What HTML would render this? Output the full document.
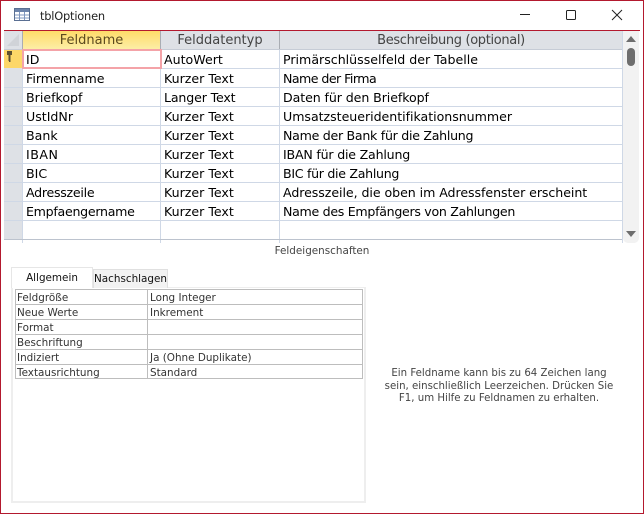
<!DOCTYPE html>
<html><head><meta charset="utf-8"><style>
html,body{margin:0;padding:0;background:#fff}
body{width:644px;height:514px;position:relative;overflow:hidden;font-family:"DejaVu Sans","Liberation Sans",sans-serif}
.a{position:absolute;white-space:nowrap}
.win{position:absolute;left:0;top:0;width:642px;height:512px;border:1px solid #b3192e}
.h{top:31px;height:18px;line-height:19px;text-align:center;font-size:13px;color:#444;background:#dee1e6}
.l{background:#cfd8e6;position:absolute}
.t{font-size:12.6px;color:#000;line-height:19px;height:19px}
.p{font-size:10.4px;color:#333;line-height:15px;height:15px}
.g{background:#bdbdbd;position:absolute}
</style></head><body>
<div class="win"></div>
<svg class="a" style="left:14px;top:8px" width="17" height="14" viewBox="0 0 17 14">
<rect x=".5" y=".5" width="15" height="12" fill="#fff" stroke="#5a6f92"/><rect x="1" y="1" width="14" height="3" fill="#6d84ab"/>
<path d="M1 7h14M1 10h14M5.500 4v8M10.500 4v8" stroke="#7f97bf" fill="none"/></svg>
<div class="a" style="left:40px;top:7px;font-size:11.4px;letter-spacing:-.2px;line-height:18px;color:#222">tblOptionen</div>
<svg class="a" style="left:510px;top:5px" width="125" height="20" viewBox="0 0 125 20" fill="none" stroke="#222">
<path d="M10 9.500h10"/><rect x="56.500" y="5.500" width="9" height="9" rx="1"/><path d="M102 5l10 10M112 5l-10 10"/></svg>
<div class="a" style="left:4px;top:30px;width:636px;height:1px;background:#b3192e"></div>

<div class="a h" style="left:4px;width:18px"></div>
<svg class="a" style="left:6px;top:33px" width="14" height="14"><path d="M1 13L13 1V13Z" fill="#d0d3d8"/></svg>
<div class="a h" style="left:23px;width:137px;background:linear-gradient(#fedb69,#fdeea6);color:#5b4a1e">Feldname</div>
<div class="a h" style="left:161px;width:118px">Felddatentyp</div>
<div class="a h" style="left:280px;width:342px;letter-spacing:-.35px">Beschreibung (optional)</div>
<div class="a" style="left:160px;top:31px;width:1px;height:18px;background:#a9adb3"></div>
<div class="a" style="left:279px;top:31px;width:1px;height:18px;background:#a9adb3"></div>
<div class="a" style="left:22px;top:31px;width:1px;height:18px;background:#a9adb3"></div>
<div class="a" style="left:4px;top:49px;width:618px;height:1px;background:#c6ccd6"></div>

<div class="a" style="left:4px;top:50px;width:18px;height:190px;background:#dee1e6"></div>
<div class="a" style="left:4px;top:50px;width:19px;height:18px;background:#fdd768"></div>
<svg class="a" style="left:6px;top:50px" width="8" height="14" viewBox="0 0 8 14"><path d="M1 1h5v4H4.500v7H3v-1H2.500V5H1z" fill="#5d5030"/></svg>

<div class="l" style="left:22px;top:50px;width:1px;height:193px"></div>
<div class="l" style="left:160px;top:50px;width:1px;height:193px"></div>
<div class="l" style="left:279px;top:50px;width:1px;height:193px"></div>
<div class="l" style="left:622px;top:31px;width:1px;height:212px"></div>
<div class="l" style="left:4px;top:87px;width:618px;height:1px"></div>
<div class="l" style="left:4px;top:106px;width:618px;height:1px"></div>
<div class="l" style="left:4px;top:125px;width:618px;height:1px"></div>
<div class="l" style="left:4px;top:144px;width:618px;height:1px"></div>
<div class="l" style="left:4px;top:163px;width:618px;height:1px"></div>
<div class="l" style="left:4px;top:182px;width:618px;height:1px"></div>
<div class="l" style="left:4px;top:201px;width:618px;height:1px"></div>
<div class="l" style="left:4px;top:220px;width:618px;height:1px"></div>
<div class="a" style="left:4px;top:239px;width:618px;height:1px;background:#bcc3ce"></div>
<div class="l" style="left:23px;top:68px;width:599px;height:1px"></div>
<div class="a" style="left:22px;top:49px;width:140px;height:20px;border:2px solid #f4a3a8;box-sizing:border-box;background:#fff"></div>

<div class="a t" style="left:26px;top:50px">ID</div><div class="a t" style="left:164px;top:50px">AutoWert</div><div class="a t" style="left:283px;top:50px">Primärschlüsselfeld der Tabelle</div>
<div class="a t" style="left:26px;top:69px">Firmenname</div><div class="a t" style="left:164px;top:69px">Kurzer Text</div><div class="a t" style="left:283px;top:69px;letter-spacing:-.55px">Name der Firma</div>
<div class="a t" style="left:26px;top:88px">Briefkopf</div><div class="a t" style="left:164px;top:88px;letter-spacing:-.15px">Langer Text</div><div class="a t" style="left:283px;top:88px;letter-spacing:-.09px">Daten für den Briefkopf</div>
<div class="a t" style="left:26px;top:107px">UstIdNr</div><div class="a t" style="left:164px;top:107px">Kurzer Text</div><div class="a t" style="left:283px;top:107px;letter-spacing:-.03px">Umsatzsteueridentifikationsnummer</div>
<div class="a t" style="left:26px;top:126px">Bank</div><div class="a t" style="left:164px;top:126px">Kurzer Text</div><div class="a t" style="left:283px;top:126px;letter-spacing:-.28px">Name der Bank für die Zahlung</div>
<div class="a t" style="left:26px;top:145px;letter-spacing:.5px">IBAN</div><div class="a t" style="left:164px;top:145px">Kurzer Text</div><div class="a t" style="left:283px;top:145px;letter-spacing:-.2px">IBAN für die Zahlung</div>
<div class="a t" style="left:26px;top:164px">BIC</div><div class="a t" style="left:164px;top:164px">Kurzer Text</div><div class="a t" style="left:283px;top:164px;letter-spacing:-.3px">BIC für die Zahlung</div>
<div class="a t" style="left:26px;top:183px;letter-spacing:-.27px">Adresszeile</div><div class="a t" style="left:164px;top:183px">Kurzer Text</div><div class="a t" style="left:283px;top:183px;letter-spacing:-.06px">Adresszeile, die oben im Adressfenster erscheint</div>
<div class="a t" style="left:26px;top:202px;letter-spacing:-.28px">Empfaengername</div><div class="a t" style="left:164px;top:202px">Kurzer Text</div><div class="a t" style="left:283px;top:202px;letter-spacing:-.3px">Name des Empfängers von Zahlungen</div>

<div class="a" style="left:623px;top:31px;width:16px;height:212px;background:#f2f2f2;border-radius:0 0 5px 5px"></div>
<svg class="a" style="left:623px;top:31px" width="16" height="212" viewBox="0 0 16 212"><path d="M8 5l5 6H3z" fill="#6e6e6e"/><rect x="4" y="17" width="8" height="18" rx="4" fill="#6e6e6e"/><path d="M3 200h10l-5 6z" fill="#6e6e6e"/></svg>

<div class="a" style="left:0;width:644px;top:244px;text-align:center;font-size:10.4px;line-height:15px;color:#444">Feldeigenschaften</div>

<div class="a" style="left:11px;top:287px;width:355px;height:216px;box-sizing:border-box;border:2px solid #eeeeee;border-top-width:1px"></div>
<div class="a" style="left:11px;top:267px;width:82px;height:21px;box-sizing:border-box;border:1px solid #e6e6e6;border-bottom:0;background:#fff;text-align:center;font-size:10.4px;line-height:20px;color:#111">Allgemein</div>
<div class="a" style="left:93px;top:269px;width:75px;height:19px;box-sizing:border-box;border:1px solid #e0e0e0;border-bottom:0;background:#f2f2f2;text-align:center;font-size:10.4px;line-height:19px;color:#111">Nachschlagen</div>

<div class="g" style="left:15px;top:289px;width:348px;height:1px"></div>
<div class="g" style="left:15px;top:304px;width:348px;height:1px"></div>
<div class="g" style="left:15px;top:319px;width:348px;height:1px"></div>
<div class="g" style="left:15px;top:334px;width:348px;height:1px"></div>
<div class="g" style="left:15px;top:349px;width:348px;height:1px"></div>
<div class="g" style="left:15px;top:364px;width:348px;height:1px"></div>
<div class="g" style="left:15px;top:378px;width:348px;height:1px"></div>
<div class="g" style="left:15px;top:289px;width:1px;height:90px"></div>
<div class="g" style="left:147px;top:289px;width:1px;height:90px"></div>
<div class="g" style="left:362px;top:289px;width:1px;height:90px"></div>

<div class="a p" style="left:17px;top:290.500px">Feldgröße</div><div class="a p" style="left:150px;top:290.500px">Long Integer</div>
<div class="a p" style="left:17px;top:305.500px">Neue Werte</div><div class="a p" style="left:150px;top:305.500px">Inkrement</div>
<div class="a p" style="left:17px;top:320.500px">Format</div>
<div class="a p" style="left:17px;top:335.500px">Beschriftung</div>
<div class="a p" style="left:17px;top:350.500px">Indiziert</div><div class="a p" style="left:150px;top:350.500px">Ja (Ohne Duplikate)</div>
<div class="a p" style="left:17px;top:365.500px">Textausrichtung</div><div class="a p" style="left:150px;top:365.500px">Standard</div>

<div class="a" style="left:364px;width:270px;top:368px;text-align:center;font-size:10.2px;line-height:12.600px;color:#444">Ein Feldname kann bis zu 64 Zeichen lang<br>sein, einschließlich Leerzeichen. Drücken Sie<br>F1, um Hilfe zu Feldnamen zu erhalten.</div>
</body></html>
